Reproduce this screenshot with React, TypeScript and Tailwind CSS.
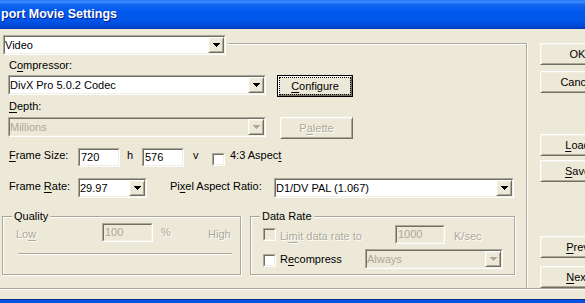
import React from "react";

const face = "bg-[#ECE9D8]";
const grayText = "text-[#ACA899] [text-shadow:1px_1px_0_#fff]";

function U({ children }: { children: React.ReactNode }) {
  return <span className="underline decoration-1 underline-offset-[2px]">{children}</span>;
}

function Sunken({
  className = "",
  bg = "bg-white",
  children,
}: {
  className?: string;
  bg?: string;
  children?: React.ReactNode;
}) {
  return (
    <div className={`shrink-0 border border-t-[#ACA899] border-l-[#ACA899] border-r-white border-b-white ${className}`}>
      <div
        className={`flex h-full border border-t-[#716F64] border-l-[#716F64] border-r-[#F1EFE2] border-b-[#F1EFE2] ${bg}`}
      >
        {children}
      </div>
    </div>
  );
}

function Raised({ className = "", children }: { className?: string; children?: React.ReactNode }) {
  return (
    <div
      className={`flex shrink-0 items-center justify-center border border-t-white border-l-white border-r-[#716F64] border-b-[#716F64] shadow-[inset_1px_1px_0_#F1EFE2,inset_-1px_-1px_0_#ACA899] ${face} ${className}`}
    >
      {children}
    </div>
  );
}

function Arrow({ disabled }: { disabled?: boolean }) {
  return (
    <svg width="7" height="4" shapeRendering="crispEdges" fill={disabled ? "#ACA899" : "#000"}>
      <rect x="0" y="0" width="7" height="1" />
      <rect x="1" y="1" width="5" height="1" />
      <rect x="2" y="2" width="3" height="1" />
      <rect x="3" y="3" width="1" height="1" />
    </svg>
  );
}

function Combo({ w, value, disabled }: { w: string; value: string; disabled?: boolean }) {
  return (
    <Sunken className={`h-[20px] ${w}`} bg={disabled ? face : "bg-white"}>
      <span className={`flex-1 leading-[16px] ${disabled ? "text-[#ACA899]" : "text-black"}`}>{value}</span>
      <Raised className="h-full w-[16px]">
        <Arrow disabled={disabled} />
      </Raised>
    </Sunken>
  );
}

function Field({ w, value, disabled }: { w: string; value: string; disabled?: boolean }) {
  return (
    <Sunken className={`h-[19px] ${w}`} bg={disabled ? face : "bg-white"}>
      <span className={`pl-[1px] leading-[15px] ${disabled ? "text-[#ACA899]" : "text-black"}`}>{value}</span>
    </Sunken>
  );
}

function Check({ disabled, className = "" }: { disabled?: boolean; className?: string }) {
  return <Sunken className={`h-[13px] w-[13px] ${className}`} bg={disabled ? face : "bg-white"} />;
}

function SideButton({ className, children }: { className: string; children: React.ReactNode }) {
  return <Raised className={`h-[22px] w-[75px] ${className}`}>{children}</Raised>;
}

export default function App() {
  return (
    <div className="flex h-[303px] w-[585px] flex-col overflow-hidden bg-[#ECE9D8] font-['Liberation_Sans',Arial,sans-serif] text-[11px] leading-[13px] text-black">
      {/* title bar */}
      <div className="h-[29px] shrink-0 bg-[linear-gradient(180deg,#1C74F8_0%,#3D8EFF_6%,#1266F0_16%,#0058EE_40%,#0056E8_70%,#0048D8_90%,#0036B4_100%)] pl-[1px] pt-[7px] text-[12.5px] font-bold leading-[15px] text-white [text-shadow:1px_1px_0_#0A1E8A]">
        port Movie Settings
      </div>

      <div className="flex h-[259px] shrink-0">
        {/* left: video settings frame */}
        <div className="flex w-[527px] shrink-0 flex-col">
          <div className="flex h-[26px] pt-[6px]">
            <div className="ml-[3px]">
              <Combo w="w-[223px]" value="Video" />
            </div>
            <div className="ml-[2px] mt-[8px] flex-1 border-t border-r border-[#ACA899] shadow-[inset_0_1px_0_#fff,1px_0_0_#fff]" />
          </div>

          <div className="flex flex-1 flex-col border-r border-[#ACA899] shadow-[1px_0_0_#fff]">
            <div className="ml-[9px] mt-[4px]">
              C<U>o</U>mpressor:
            </div>
            <div className="ml-[8px] mt-[3px] flex items-start">
              <Combo w="w-[258px]" value="DivX Pro 5.0.2 Codec" />
              <div className="ml-[11px] h-[22px] w-[76px] border border-black">
                <Raised className="h-full w-full">
                  <div className="flex h-full w-full items-center justify-center border border-dotted border-black">
                    <U>C</U>onfigure
                  </div>
                </Raised>
              </div>
            </div>

            <div className="ml-[9px] mt-[3px]">
              <U>D</U>epth:
            </div>
            <div className="ml-[8px] mt-[4px] flex items-start">
              <Combo w="w-[258px]" value="Millions" disabled />
              <SideButton className={`ml-[14px] !w-[73px] ${grayText}`}>
                P<U>a</U>lette
              </SideButton>
            </div>

            <div className="ml-[9px] mt-[9px] flex h-[19px] items-start">
              <span className="mt-[1px] w-[69px]">
                <U>F</U>rame Size:
              </span>
              <Field w="w-[42px]" value="720" />
              <span className="ml-[7px] mt-[1px] w-[15px]">h</span>
              <Field w="w-[42px]" value="576" />
              <span className="ml-[9px] mt-[1px] w-[19px]">v</span>
              <Check className="mt-[5px]" />
              <span className="ml-[5px] mt-[1px]">
                4:3 Aspec<U>t</U>
              </span>
            </div>

            <div className="ml-[9px] mt-[11px] flex items-start">
              <span className="mt-[2px] w-[69px]">
                Frame <U>R</U>ate:
              </span>
              <Combo w="w-[69px]" value="29.97" />
              <span className="ml-[23px] mt-[2px] w-[104px]">
                Pi<U>x</U>el Aspect Ratio:
              </span>
              <Combo w="w-[240px]" value="D1/DV PAL (1.067)" />
            </div>

            <div className="mt-[12px] flex">
              <fieldset className="m-0 ml-[2px] h-[65px] w-[239px] min-w-0 shrink-0 border border-[#ACA899] p-0 shadow-[inset_1px_1px_0_#fff,1px_1px_0_#fff]">
                <legend className="ml-[9px] bg-[#ECE9D8] px-[2px] leading-[13px]">Quality</legend>
                <div className="flex h-[19px] items-start">
                  <span className={`ml-[13px] mt-[5px] w-[86px] ${grayText}`}>
                    Lo<U>w</U>
                  </span>
                  <Field w="w-[51px]" value="100" disabled />
                  <span className={`ml-[8px] mt-[3px] w-[47px] ${grayText}`}>%</span>
                  <span className={`mt-[5px] ${grayText}`}>High</span>
                </div>
                <div className="ml-[15px] mt-[11px] h-0 w-[214px] border-t border-[#ACA899] shadow-[0_1px_0_#fff]" />
              </fieldset>

              <fieldset className="m-0 ml-[9px] h-[65px] w-[265px] min-w-0 shrink-0 border border-[#ACA899] p-0 shadow-[inset_1px_1px_0_#fff,1px_1px_0_#fff]">
                <legend className="ml-[9px] bg-[#ECE9D8] px-[2px] leading-[13px]">Data Rate</legend>
                <div className="mt-[2px] flex items-start">
                  <Check disabled className="ml-[12px] mt-[3px]" />
                  <span className={`ml-[4px] mt-[5px] w-[115px] ${grayText}`}>
                    Li<U>m</U>it data rate to
                  </span>
                  <Field w="w-[50px]" value="1000" disabled />
                  <span className={`ml-[9px] mt-[5px] ${grayText}`}>K/sec</span>
                </div>
                <div className="mt-[5px] flex items-start">
                  <Check className="ml-[12px] mt-[5px]" />
                  <span className="ml-[4px] mt-[4px] w-[85px]">
                    R<U>e</U>compress
                  </span>
                  <Combo w="w-[138px]" value="Always" disabled />
                </div>
              </fieldset>
            </div>
          </div>
        </div>

        {/* right: dialog buttons */}
        <div className="ml-[13px] flex w-[75px] shrink-0 flex-col">
          <SideButton className="mt-[14px]">OK</SideButton>
          <SideButton className="mt-[6px]">Cancel</SideButton>
          <SideButton className="mt-[41px]">
            <U>L</U>oad
          </SideButton>
          <SideButton className="mt-[4px]">
            <U>S</U>ave
          </SideButton>
          <SideButton className="mt-[54px]">
            <U>P</U>rev
          </SideButton>
          <SideButton className="mt-[8px]">
            <U>N</U>ext
          </SideButton>
        </div>
      </div>

      <div className="h-[2px] shrink-0 border-t border-[#ACA899] bg-white" />
      <div className="h-[9px] shrink-0" />
      <div className="flex-1 border-t border-[#0A2A8C] bg-[#0055E5]" />
    </div>
  );
}
